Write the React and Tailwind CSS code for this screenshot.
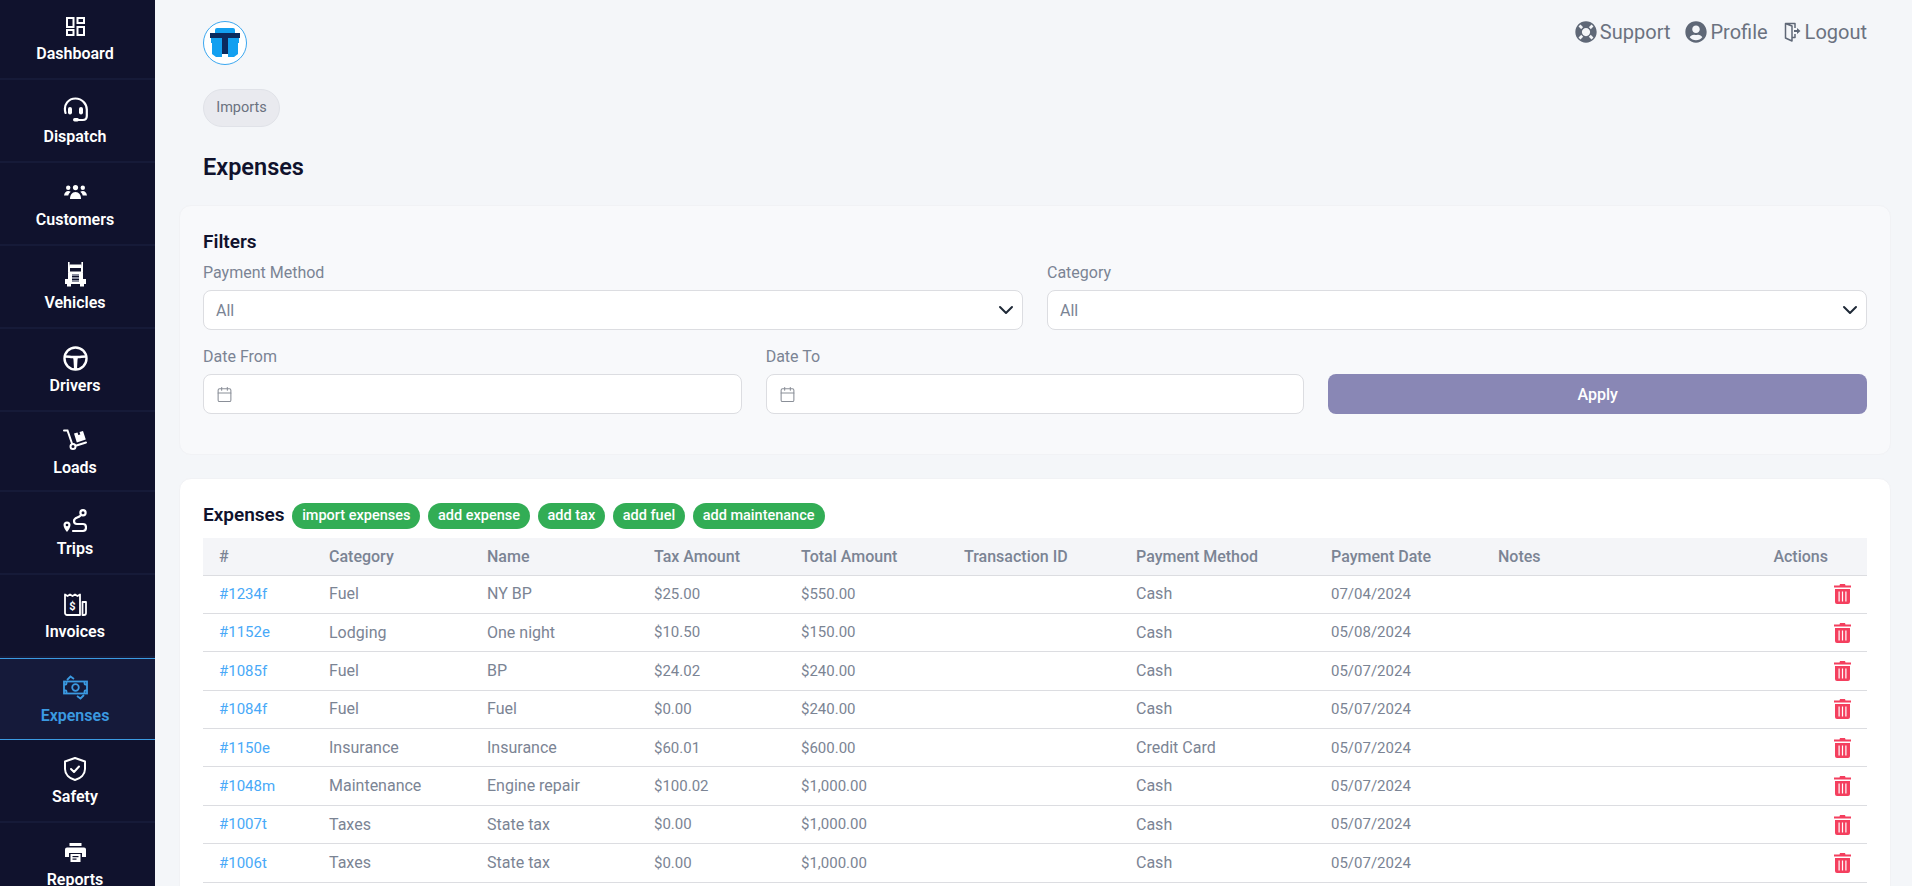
import React from 'react';
import { FaLifeRing, FaUserCircle } from 'react-icons/fa';
import { Calendar, ChevronDown } from 'lucide-react';

const DashboardIcon = () => (
  <svg viewBox="0 0 19 19" className="h-[19px] w-[19px]" fill="none" stroke="currentColor" strokeWidth="2">
    <rect x="1" y="1" width="6.500" height="9" />
    <rect x="11.500" y="1" width="6.500" height="5" />
    <rect x="1" y="13" width="6.500" height="5" />
    <rect x="11.500" y="10" width="6.500" height="8" />
  </svg>
);

const HeadsetIcon = () => (
  <svg viewBox="0 0 25 25" className="h-[25px] w-[25px]" fill="none" stroke="currentColor" strokeWidth="2.200" strokeLinecap="round">
    <path d="M2.500 16C0 7 6 1.500 12.500 1.500S24 7 23.800 13v6c0 3-1.500 4-4 4H14" />
    <rect x="5" y="10" width="4" height="7.500" rx="2" fill="currentColor" stroke="none" />
    <rect x="16" y="10" width="4" height="7.500" rx="2" fill="currentColor" stroke="none" />
    <rect x="10" y="21" width="6" height="3.500" rx="1.700" fill="currentColor" stroke="none" />
  </svg>
);

const UsersIcon = () => (
  <svg viewBox="0 0 23 14" className="h-[14px] w-[23px]" fill="currentColor">
    <circle cx="11.500" cy="2.600" r="2.600" />
    <circle cx="4.200" cy="2.800" r="2.200" />
    <circle cx="18.800" cy="2.800" r="2.200" />
    <path d="M6 14c0-4 2-7 5.500-7S17 10 17 14z" />
    <path d="M0 10.500C.5 7.500 2 6 4.200 6c1 0 1.800.3 2.500.8C5.300 8 4.600 9.200 4.300 10.500z" />
    <path d="M23 10.500C22.500 7.500 21 6 18.800 6c-1 0-1.800.3-2.500.8 1.400 1.200 2.100 2.400 2.400 3.700z" />
  </svg>
);

const TruckIcon = () => (
  <svg viewBox="0 0 21 25" className="h-[25px] w-[21px]" fill="currentColor">
    <rect x="3" y="0" width="1.600" height="10" />
    <rect x="16.400" y="0" width="1.600" height="10" />
    <path d="M4.500 2.500h12L18 11v6h3v5H0v-5h3v-6z" />
    <rect x="5" y="6" width="11" height="3.500" fill="#10122d" />
    <rect x="7" y="12" width="7" height="8" fill="#8a8d9e" />
    <rect x="7" y="14" width="7" height="1" fill="#10122d" />
    <rect x="7" y="17" width="7" height="1" fill="#10122d" />
    <rect x="2" y="22" width="4" height="2.500" />
    <rect x="15" y="22" width="4" height="2.500" />
  </svg>
);

const WheelIcon = () => (
  <svg viewBox="0 0 25 25" className="h-[25px] w-[25px]" fill="none" stroke="currentColor" strokeWidth="2.400">
    <circle cx="12.500" cy="12.500" r="11" />
    <path d="M2 10.500c4 0 5 .5 7 .5h7c2 0 3-.5 7-.5" />
    <path d="M10 11h5l-.5 3-.5 9h-3l-.5-9z" fill="currentColor" stroke="none" />
  </svg>
);

const LoadIcon = () => (
  <svg viewBox="0 0 24 21" className="h-[21px] w-[24px]" fill="none" stroke="currentColor" strokeWidth="2" strokeLinecap="round">
    <path d="M1 1.500h3.500L9 14.500" />
    <circle cx="10" cy="17.500" r="2.500" />
    <path d="M13.500 16.500l9.500-3" />
    <path d="M11 4.500l3.500-1 .8 2.500 2-.6-.8-2.500 3.500-1 2.800 8.500-9 3z" fill="currentColor" stroke="none" />
  </svg>
);

const RouteIcon = () => (
  <svg viewBox="0 0 24 24" className="h-6 w-6" fill="none" stroke="currentColor" strokeWidth="2.200" strokeLinecap="round" strokeLinejoin="round">
    <circle cx="20" cy="3.700" r="2.600" />
    <path d="M17 7c-2 2-6 1.500-6 5 0 2 1 3 3 3h6c2 0 3 1.500 3 3.500s-1 3.500-3 3.500H10" />
    <path d="M4 23C2.500 21 .5 18.500 .5 16a3.500 3.500 0 0 1 7 0c0 2.500-2 5-3.500 7z" fill="currentColor" stroke="none" />
    <circle cx="4" cy="16" r="1.300" fill="#10122d" stroke="none" />
  </svg>
);

const InvoiceIcon = () => (
  <svg viewBox="0 0 23 23" className="h-[23px] w-[23px]" fill="none" stroke="currentColor" strokeWidth="1.800" strokeLinejoin="round">
    <path d="M1 1.500l2.500 1.500L6 1.500 8.500 3 11 1.500 13.500 3 16 1.500V22H3a2 2 0 0 1-2-2z" />
    <path d="M18.500 9H22v11a2 2 0 0 1-2 2h-1.500z" />
    <text x="8.500" y="16.500" textAnchor="middle" fontSize="11" fontWeight="700" fill="currentColor" stroke="none" fontFamily="Roboto, sans-serif">$</text>
  </svg>
);

const CashIcon = () => (
  <svg viewBox="0 0 25 25" className="h-[25px] w-[25px]" fill="none" stroke="currentColor" strokeWidth="1.800">
    <rect x="1" y="6.500" width="23" height="12" />
    <circle cx="12.500" cy="12.500" r="3.300" />
    <path d="M1 9.500h1.500a1 1 0 0 0 1-1v-2 M24 9.500h-1.500a1 1 0 0 1-1-1v-2 M1 15.500h1.500a1 1 0 0 1 1 1v2 M24 15.500h-1.500a1 1 0 0 0-1 1v2" />
    <path d="M4 5l3.500-3.500L11 4 M21 20l-3.500 3.500L14 21" />
  </svg>
);

const ShieldIcon = () => (
  <svg viewBox="0 0 22 24" className="h-6 w-[22px]" fill="none" stroke="currentColor" strokeWidth="2" strokeLinejoin="round" strokeLinecap="round">
    <path d="M11 1l10 3.500v7.500c0 5.500-4.500 9.500-10 11-5.500-1.500-10-5.500-10-11V4.500z" />
    <path d="M7 12l3 3 5-5.500" />
  </svg>
);

const PrinterIcon = () => (
  <svg viewBox="0 0 21 19" className="h-[19px] w-[21px]" fill="currentColor">
    <rect x="4.500" y="0" width="12" height="3" />
    <path d="M2 4.500h17a2 2 0 0 1 2 2V14h-4V10H4v4H0V6.500a2 2 0 0 1 2-2z" />
    <rect x="5.500" y="11" width="10" height="8" />
    <rect x="7.500" y="13" width="6" height="1.200" fill="#10122d" />
    <rect x="7.500" y="15.500" width="4" height="1.200" fill="#10122d" />
  </svg>
);

const LogoutIcon = () => (
  <svg viewBox="0 0 17 20" className="h-5 w-[17px]" fill="none" stroke="currentColor" strokeWidth="1.500" strokeLinejoin="round">
    <path d="M11 6V1.500H1.500v14.500l6.500 3V4L1.500 1.500" />
    <path d="M8 15.500h3V12" />
    <path d="M10 8h3V6l3.500 3-3.500 3v-2h-3z" fill="currentColor" stroke="none" />
  </svg>
);

const TrashIcon = () => (
  <svg viewBox="0 0 17 20" className="h-5 w-[17px] text-[#f43f5e]" fill="currentColor">
    <path d="M6 0h5l.5 1.500H17V3.500H0V1.500h5.500z" />
    <path d="M1 5h15v13a2 2 0 0 1-2 2H3a2 2 0 0 1-2-2z" />
    <rect x="4.500" y="7.500" width="1.200" height="10" fill="#fff" />
    <rect x="7.900" y="7.500" width="1.200" height="10" fill="#fff" />
    <rect x="11.300" y="7.500" width="1.200" height="10" fill="#fff" />
  </svg>
);

const navItems = [
  { label: 'Dashboard', icon: <DashboardIcon />, h: 'h-[83px]' },
  { label: 'Dispatch', icon: <HeadsetIcon />, h: 'h-[83px]' },
  { label: 'Customers', icon: <UsersIcon />, h: 'h-[82.5px]' },
  { label: 'Vehicles', icon: <TruckIcon />, h: 'h-[83.5px]' },
  { label: 'Drivers', icon: <WheelIcon />, h: 'h-[83px]' },
  { label: 'Loads', icon: <LoadIcon />, h: 'h-[80px]' },
  { label: 'Trips', icon: <RouteIcon />, h: 'h-[83px]' },
  { label: 'Invoices', icon: <InvoiceIcon />, h: 'h-[83px]' },
  { label: 'Expenses', icon: <CashIcon />, h: 'h-[82px]', active: true },
  { label: 'Safety', icon: <ShieldIcon />, h: 'h-[83px]' },
  { label: 'Reports', icon: <PrinterIcon />, h: 'h-[83px]' },
];

const columns = ['#', 'Category', 'Name', 'Tax Amount', 'Total Amount', 'Transaction ID', 'Payment Method', 'Payment Date', 'Notes'];

const expenses = [
  ['#1234f', 'Fuel', 'NY BP', '$25.00', '$550.00', 'Cash', '07/04/2024'],
  ['#1152e', 'Lodging', 'One night', '$10.50', '$150.00', 'Cash', '05/08/2024'],
  ['#1085f', 'Fuel', 'BP', '$24.02', '$240.00', 'Cash', '05/07/2024'],
  ['#1084f', 'Fuel', 'Fuel', '$0.00', '$240.00', 'Cash', '05/07/2024'],
  ['#1150e', 'Insurance', 'Insurance', '$60.01', '$600.00', 'Credit Card', '05/07/2024'],
  ['#1048m', 'Maintenance', 'Engine repair', '$100.02', '$1,000.00', 'Cash', '05/07/2024'],
  ['#1007t', 'Taxes', 'State tax', '$0.00', '$1,000.00', 'Cash', '05/07/2024'],
  ['#1006t', 'Taxes', 'State tax', '$0.00', '$1,000.00', 'Cash', '05/07/2024'],
];

const actions = ['import expenses', 'add expense', 'add tax', 'add fuel', 'add maintenance'];

const SelectBox = ({ label }) => (
  <div>
    <div className="mb-[6px] h-[22px] text-base leading-[22px] text-[#7b8494]">{label}</div>
    <div className="flex h-10 items-center justify-between rounded-lg border border-[#dcdde1] bg-white pl-3 pr-1 text-base text-[#7b8494]">
      <span className="pt-[1px]">All</span>
      <ChevronDown className="h-6 w-6 text-[#1f2937]" strokeWidth={2} />
    </div>
  </div>
);

const DateBox = ({ label }) => (
  <div>
    <div className="mb-[6px] h-[22px] text-base leading-[22px] text-[#7b8494]">{label}</div>
    <div className="flex h-10 items-center rounded-lg border border-[#dcdde1] bg-white pl-3">
      <Calendar className="h-[17px] w-[17px] text-[#8a8f98]" strokeWidth={1.5} />
    </div>
  </div>
);

export default function App() {
  return (
    <div className="flex h-[886px] overflow-hidden bg-[#f4f6f9] font-['Roboto',sans-serif]">
      <aside className="-mt-[3px] w-[155px] shrink-0 overflow-hidden bg-[#10122d]">
        {navItems.map((item) => (
          <div
            key={item.label}
            className={`flex ${item.h} flex-col items-center justify-center pb-[1px] pr-[5px] text-base font-semibold ${
              item.active
                ? 'border-y border-[#3b9ae1] bg-[#151a3a] text-[#3b9ae1]'
                : 'border-b-2 border-[#161a38] text-white'
            }`}
          >
            <div className="flex h-8 items-center justify-center">{item.icon}</div>
            <span className="mt-[2px] leading-5">{item.label}</span>
          </div>
        ))}
      </aside>

      <main className="min-w-0 flex-1 pl-6 pr-[21px]">
        <header className="flex items-start justify-between px-6 pt-[21px]">
          <div className="flex h-11 w-11 items-center justify-center rounded-full border border-[#3ba7f0] bg-white">
            <svg viewBox="0 0 32 32" className="h-8 w-8">
              <path d="M6 3a2 2 0 0 1 2-2h16a2 2 0 0 1 2 2v4H6z" fill="#13a0f0" />
              <path d="M2 11h11v19H7l-4-3V16H2z M19 11h11v5h-1v11l-4 3h-6z" fill="#13a0f0" />
              <path d="M1 6h30v5H1z M13 11h6v16h-6z" fill="#0b2a5e" />
            </svg>
          </div>
          <nav className="flex items-center text-xl leading-[22px] text-[#6b7280]">
            <FaLifeRing className="h-[22px] w-[22px] text-[#5f6877]" />
            <span className="ml-[3px]">Support</span>
            <FaUserCircle className="ml-[15px] h-[22px] w-[22px] text-[#5f6877]" />
            <span className="ml-[3px]">Profile</span>
            <span className="ml-[16px] text-[#5f6877]"><LogoutIcon /></span>
            <span className="ml-[4px]">Logout</span>
          </nav>
        </header>

        <div className="mt-6 pl-6">
          <span className="inline-flex h-[38px] w-[77px] items-center justify-center rounded-full border border-[#e0e2e8] bg-[#e9eaef] text-[14.5px] text-[#6b7280]">
            Imports
          </span>
        </div>

        <h1 className="mt-6 h-8 pl-6 text-[23.5px] font-semibold leading-8 text-[#10122d]">Expenses</h1>

        <section className="mt-[22px] h-[250px] rounded-xl border border-[#f1f2f5] bg-[#f8f9fb] px-[23px] pt-[23px]">
          <h2 className="h-[26px] text-[19px] font-semibold leading-[26px] text-[#10122d]">Filters</h2>
          <div className="mt-[7px] grid grid-cols-2 gap-6">
            <SelectBox label="Payment Method" />
            <SelectBox label="Category" />
          </div>
          <div className="mt-4 grid grid-cols-3 gap-6">
            <DateBox label="Date From" />
            <DateBox label="Date To" />
            <div className="flex items-end">
              <button className="h-10 w-full rounded-lg bg-[#8987b5] pt-[1px] text-base font-medium text-white">Apply</button>
            </div>
          </div>
        </section>

        <section className="mt-[23px] rounded-xl border border-[#f1f2f5] bg-white px-[23px] pb-12 pt-[23px]">
          <div className="flex h-7 items-center gap-[7.5px]">
            <h2 className="-mt-[2px] text-[19px] font-semibold text-[#10122d]">Expenses</h2>
            {actions.map((a) => (
              <span key={a} className="flex h-[26px] items-center rounded-full bg-[#32ad55] px-[10px] text-[14.5px] font-medium text-white">
                {a}
              </span>
            ))}
          </div>
          <table className="mt-2 w-full table-fixed border-collapse text-base">
            <colgroup>
              <col className="w-[110px]" />
              <col className="w-[158px]" />
              <col className="w-[167px]" />
              <col className="w-[147px]" />
              <col className="w-[163px]" />
              <col className="w-[172px]" />
              <col className="w-[195px]" />
              <col className="w-[167px]" />
              <col />
            </colgroup>
            <thead>
              <tr className="h-[37px] border-b border-[#dcdde1] bg-[#f4f5f8] text-left text-[#7b8494]">
                {columns.map((c) => (
                  <th key={c} className="px-4 pt-[2px] font-medium">
                    {c}
                    {c === 'Notes' && <span className="float-right mr-[23px]">Actions</span>}
                  </th>
                ))}
              </tr>
            </thead>
            <tbody>
              {expenses.map((row) => (
                <tr key={row[0]} className="h-[38.4px] border-b border-[#dcdde1] text-[#7b8494]">
                  <td className="px-4 text-[15px] text-[#48a9f8]">{row[0]}</td>
                  <td className="px-4">{row[1]}</td>
                  <td className="px-4">{row[2]}</td>
                  <td className="px-4 text-[15px]">{row[3]}</td>
                  <td className="px-4 text-[15px]">{row[4]}</td>
                  <td className="px-4"></td>
                  <td className="px-4">{row[5]}</td>
                  <td className="px-4 text-[15px]">{row[6]}</td>
                  <td className="px-4">
                    <div className="flex justify-end"><TrashIcon /></div>
                  </td>
                </tr>
              ))}
            </tbody>
          </table>
        </section>
      </main>
    </div>
  );
}
